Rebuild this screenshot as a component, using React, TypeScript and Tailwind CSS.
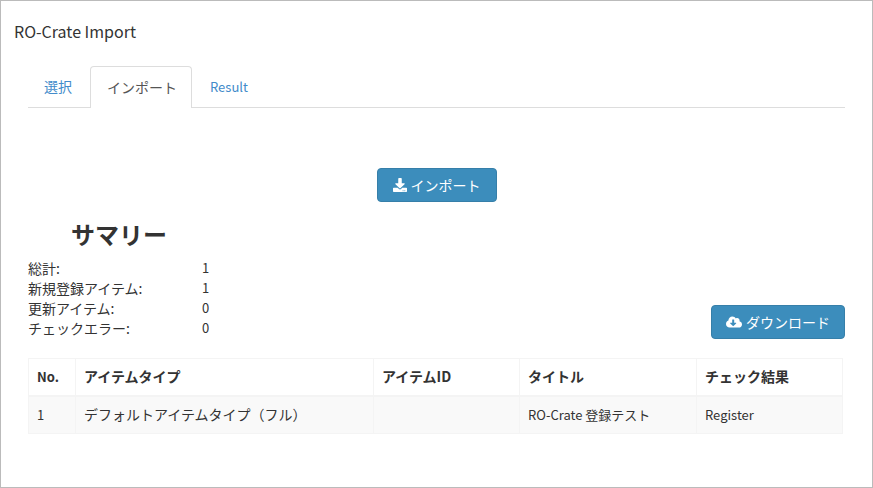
import { FaDownload, FaCloudDownloadAlt } from 'react-icons/fa';

const summary = [
  { label: '総計:', value: '1' },
  { label: '新規登録アイテム:', value: '1' },
  { label: '更新アイテム:', value: '0' },
  { label: 'チェックエラー:', value: '0' },
];

export default function App() {
  return (
    <div className="w-[873px] h-[488px] bg-white border border-[#bbbbbb] text-[#333333] text-[14px] overflow-hidden font-['Noto_Sans_CJK_JP','Noto_Sans',sans-serif]">
      <h1 className="pl-[13px] pt-[19px] h-[65px] text-[16px] leading-[22px] font-normal">RO-Crate Import</h1>

      <div className="mx-[27px]">
        {/* Tabs */}
        <div className="flex h-[42px] border-b border-[#dddddd]">
          <a className="w-[62px] pl-4 pt-[10px] text-[#428bca] leading-5">選択</a>
          <a className="w-[102px] h-[42px] pl-4 pt-[10px] leading-5 text-[#555555] bg-white border border-b-0 border-[#dddddd] rounded-t">インポート</a>
          <a className="pl-[18px] pt-[11px] text-[13px] leading-5 text-[#428bca]">Result</a>
        </div>

        {/* Import button */}
        <div className="flex justify-center pt-[60px]">
          <button className="w-[120px] h-[34px] flex items-center justify-center gap-1 bg-[#3c8dbc] border border-[#367fa9] rounded text-white">
            <FaDownload className="w-[14px] h-[14px]" />
            <span>インポート</span>
          </button>
        </div>

        {/* Summary */}
        <div className="flex justify-between items-end mt-4">
          <div>
            <h2 className="pl-[43px] text-[24px] leading-[32px] font-bold text-[#333333] mb-[8px]">サマリー</h2>
            {summary.map((row) => (
              <div key={row.label} className="flex h-5 leading-5 text-[#333333]">
                <span className="w-[174px]">{row.label}</span>
                <span className="text-[13px]">{row.value}</span>
              </div>
            ))}
          </div>
          <button className="w-[134px] h-[34px] mb-[-1px] flex items-center justify-center gap-1 bg-[#3c8dbc] border border-[#367fa9] rounded text-white">
            <FaCloudDownloadAlt className="w-[16px] h-[16px]" />
            <span>ダウンロード</span>
          </button>
        </div>

        {/* Result table */}
        <table className="mt-[20px] w-[814px] table-fixed border-collapse text-[13px]">
          <colgroup>
            <col className="w-[47px]" />
            <col className="w-[298px]" />
            <col className="w-[146px]" />
            <col className="w-[177px]" />
            <col className="w-[146px]" />
          </colgroup>
          <thead>
            <tr className="h-[37px] text-left text-[14px]">
              <th className="border border-[#f4f4f4] border-b-2 px-2 font-bold text-[13px]">No.</th>
              <th className="border border-[#f4f4f4] border-b-2 px-2 font-bold">アイテムタイプ</th>
              <th className="border border-[#f4f4f4] border-b-2 px-2 font-bold">アイテムID</th>
              <th className="border border-[#f4f4f4] border-b-2 px-2 font-bold">タイトル</th>
              <th className="border border-[#f4f4f4] border-b-2 px-2 font-bold">チェック結果</th>
            </tr>
          </thead>
          <tbody>
            <tr className="h-[38px] bg-[#f9f9f9]">
              <td className="border border-[#f4f4f4] px-2">1</td>
              <td className="border border-[#f4f4f4] px-2 text-[14px]">デフォルトアイテムタイプ（フル）</td>
              <td className="border border-[#f4f4f4] px-2"></td>
              <td className="border border-[#f4f4f4] px-2">RO-Crate 登録テスト</td>
              <td className="border border-[#f4f4f4] px-2">Register</td>
            </tr>
          </tbody>
        </table>
      </div>
    </div>
  );
}
